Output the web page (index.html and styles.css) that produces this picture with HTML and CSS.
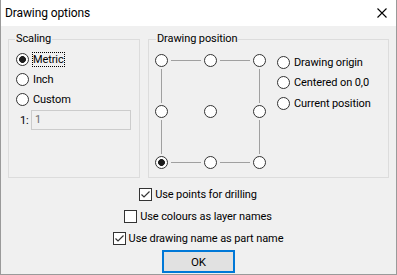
FILE: index.html
```html
<!DOCTYPE html>
<html>
<head>
<meta charset="utf-8">
<link rel="stylesheet" href="styles.css">
</head>
<body>
<div class="window">
  <div class="titlebar">
    <span class="title">Drawing options</span>
    <svg class="close" width="10" height="10" viewBox="0 0 10 10"><path d="M0.5 0.5 L9.5 9.5 M9.5 0.5 L0.5 9.5" stroke="#000" stroke-width="1.1" fill="none"/></svg>
  </div>
  <div class="content">
    <div class="groups">
      <div class="group scaling">
        <span class="legend">Scaling</span>
        <div class="radio-row"><span class="radio checked"></span><span class="label focus">Metric</span></div>
        <div class="radio-row"><span class="radio"></span><span class="label">Inch</span></div>
        <div class="radio-row"><span class="radio"></span><span class="label">Custom</span></div>
        <div class="ratio-row"><span class="ratio-label">1:</span><span class="field">1</span></div>
      </div>
      <div class="group position">
        <span class="legend">Drawing position</span>
        <div class="pos-body">
          <div class="pos-grid">
            <span class="radio r1 c1"></span><span class="hline r1 c2"></span><span class="radio r1 c3"></span><span class="hline r1 c4"></span><span class="radio r1 c5"></span>
            <span class="vline r2 c1"></span><span class="vline r2 c5"></span>
            <span class="radio r3 c1"></span><span class="radio r3 c3"></span><span class="radio r3 c5"></span>
            <span class="vline r4 c1"></span><span class="vline r4 c5"></span>
            <span class="radio checked r5 c1"></span><span class="hline r5 c2"></span><span class="radio r5 c3"></span><span class="hline r5 c4"></span><span class="radio r5 c5"></span>
          </div>
          <div class="pos-options">
            <div class="radio-row"><span class="radio"></span><span class="label">Drawing origin</span></div>
            <div class="radio-row"><span class="radio"></span><span class="label">Centered on 0,0</span></div>
            <div class="radio-row"><span class="radio"></span><span class="label">Current position</span></div>
          </div>
        </div>
      </div>
    </div>
    <div class="checks">
      <div class="check-row"><span class="checkbox"><svg width="11" height="11" viewBox="0 0 11 11"><path d="M1.5 5.5 L4 8 L9.5 2.5" stroke="#333" stroke-width="1.2" fill="none"/></svg></span><span class="label">Use points for drilling</span></div>
      <div class="check-row"><span class="checkbox"></span><span class="label">Use colours as layer names</span></div>
      <div class="check-row"><span class="checkbox"><svg width="11" height="11" viewBox="0 0 11 11"><path d="M1.5 5.5 L4 8 L9.5 2.5" stroke="#333" stroke-width="1.2" fill="none"/></svg></span><span class="label">Use drawing name as part name</span></div>
      <button class="ok">OK</button>
    </div>
  </div>
</div>
</body>
</html>
```

FILE: styles.css
```css
* { box-sizing: border-box; }
html, body { margin: 0; padding: 0; }
body {
  width: 397px;
  height: 275px;
  font-family: "Roboto", "Noto Sans", sans-serif;
  font-size: 11px;
  letter-spacing: -0.1px;
  line-height: 15px;
  color: #000;
  background: #f0f0f0;
  overflow: hidden;
}
.window {
  width: 397px;
  height: 275px;
  border: 1px solid #9a9a9a;
  border-top: none;
  display: flex;
  flex-direction: column;
  background: #f0f0f0;
}
.titlebar {
  height: 26px;
  background: #fff;
  display: flex;
  align-items: center;
  justify-content: space-between;
  padding: 0 9px 0 4px;
  flex: none;
}
.title { font-size: 12px; }
.close { display: block; }
.content {
  padding: 13px 7px 0 7px;
  flex: 1;
  display: flex;
  flex-direction: column;
}
.groups {
  display: flex;
  gap: 8px;
}
.group {
  border: 1px solid #dcdcdc;
  height: 139px;
  display: flex;
  flex-direction: column;
  align-items: flex-start;
}
.scaling { width: 132px; padding: 0 0 0 6px; }
.position { width: 241px; padding: 0 0 0 6px; }
.legend {
  margin-top: -9px;
  background: #f0f0f0;
  padding: 0 1px;
  white-space: nowrap;
}
.position .legend { margin-left: 1px; }
.radio-row {
  height: 20px;
  display: flex;
  align-items: center;
  gap: 3px;
  white-space: nowrap;
}
.scaling .radio-row { margin-left: 1px; }
.scaling .radio-row:first-of-type { margin-top: 3px; }
.radio {
  width: 13px;
  height: 13px;
  border: 1px solid #333;
  border-radius: 50%;
  background: #fff;
  flex: none;
  display: block;
}
.radio.checked {
  background: radial-gradient(circle, #1c1c1c 3.1px, #fff 3.7px);
}
.label { padding: 0 1px; }
.label.focus { outline: 1px dotted #000; outline-offset: -1px; padding: 0 1px; }
.ratio-row {
  display: flex;
  align-items: center;
  gap: 0;
  margin-top: 1px;
  margin-left: 5px;
}
.ratio-label { width: 11px; }
.field {
  width: 100px;
  height: 20px;
  border: 1px solid #cccccc;
  background: #f0f0f0;
  color: #6d6d6d;
  padding: 1px 3px;
  line-height: 16px;
}
.pos-body {
  display: flex;
  gap: 11px;
  margin-top: 8px;
}
.pos-grid {
  display: grid;
  grid-template-columns: 13px 36px 13px 36px 13px;
  grid-template-rows: 13px 38px 13px 38px 13px;
}
.r1 { grid-row: 1; } .r2 { grid-row: 2; } .r3 { grid-row: 3; } .r4 { grid-row: 4; } .r5 { grid-row: 5; }
.c1 { grid-column: 1; } .c2 { grid-column: 2; } .c3 { grid-column: 3; } .c4 { grid-column: 4; } .c5 { grid-column: 5; }
.hline {
  align-self: center;
  height: 1px;
  margin: 0 3px;
  background: #a0a0a0;
}
.vline {
  justify-self: center;
  width: 1px;
  margin: 2px 0;
  background: #a0a0a0;
}
.pos-options {
  display: flex;
  flex-direction: column;
  margin-top: -2px;
}
.pos-options .radio-row { height: 20.5px; }
.checks {
  display: flex;
  flex-direction: column;
  align-items: center;
  margin-top: 5px;
}
.check-row {
  height: 22px;
  display: flex;
  align-items: center;
  gap: 2px;
  white-space: nowrap;
}
.checkbox {
  width: 13px;
  height: 13px;
  border: 1px solid #333;
  background: #fff;
  flex: none;
  display: flex;
  align-items: center;
  justify-content: center;
}
.checkbox svg { display: block; }
.ok {
  margin-top: 1px;
  width: 73px;
  height: 23px;
  border: 2px solid #0078d7;
  background: #e1e1e1;
  font-family: inherit;
  font-size: 11.5px;
  color: #000;
  padding: 0;
}
```
